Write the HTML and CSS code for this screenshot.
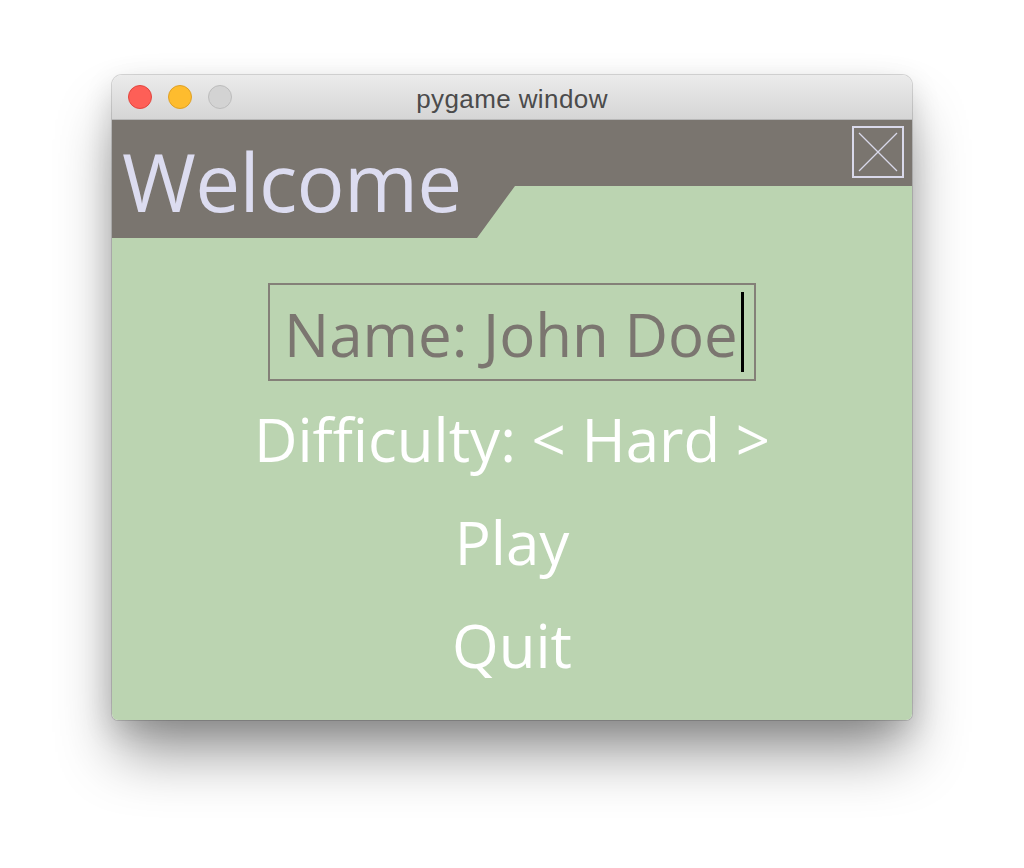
FILE: index.html
```html
<!DOCTYPE html>
<html>
<head>
<meta charset="utf-8">
<link rel="stylesheet" href="styles.css">
</head>
<body>
<div class="window">
  <div class="titlebar">
    <div class="lights">
      <span class="light red"></span>
      <span class="light yellow"></span>
      <span class="light gray"></span>
    </div>
    <div class="title">pygame window</div>
    <div></div>
  </div>
  <div class="content">
    <div class="header">
      <div class="heading">Welcome</div>
      <div class="closebox">
        <svg width="48" height="48" viewBox="0 0 48 48">
          <line x1="5" y1="5" x2="43" y2="43" />
          <line x1="43" y1="5" x2="5" y2="43" />
        </svg>
      </div>
    </div>
    <div class="menu">
      <div class="textbox"><span class="field">Name: John Doe</span><span class="cursor"></span></div>
      <div class="item">Difficulty: &lt; Hard &gt;</div>
      <div class="item">Play</div>
      <div class="item">Quit</div>
    </div>
  </div>
</div>
</body>
</html>
```
FILE: styles.css
```css
html, body {
  margin: 0;
  padding: 0;
  background: #ffffff;
}
body {
  padding: 75px 0 0 112px;
  height: 868px;
  box-sizing: border-box;
  overflow: hidden;
}
.window {
  width: 800px;
  border-radius: 10px 10px 6px 6px;
  overflow: hidden;
  box-shadow: 0 38px 60px -6px rgba(0,0,0,0.42), 0 10px 30px rgba(0,0,0,0.14), 0 0 0 1px rgba(0,0,0,0.14);
}
.titlebar {
  height: 44px;
  border-bottom: 1px solid #b8b8b8;
  background: linear-gradient(#ebebeb, #d5d5d5);
  display: grid;
  grid-template-columns: 1fr auto 1fr;
  align-items: center;
}
.lights {
  display: flex;
  gap: 16px;
  padding-left: 16px;
}
.light {
  width: 22px;
  height: 22px;
  border-radius: 50%;
  border: 1px solid;
}
.red { background: #fe5f57; border-color: #e1463f; }
.yellow { background: #febc2e; border-color: #dea026; }
.gray { background: #d3d3d3; border-color: #bcbcbc; }
.title {
  font-family: "Liberation Sans", Arial, sans-serif;
  font-size: 26px;
  letter-spacing: 0.4px;
  color: #4b4b4b;
  line-height: 44px;
  padding-top: 2px;
  height: 44px;
  box-sizing: border-box;
}
.content {
  height: 600px;
  background: #bbd4b1;
  font-family: "Open Sans", "Noto Sans", sans-serif;
}
.header {
  height: 118px;
  background: #7a756f;
  clip-path: polygon(0 0, 800px 0, 800px 66px, 403px 66px, 365px 118px, 0 118px);
  display: flex;
  justify-content: space-between;
  align-items: flex-start;
}
.heading {
  font-size: 80px;
  line-height: 80px;
  padding: 21px 0 0 10px;
  color: #dcdcf0;
  letter-spacing: -0.7px;
}
.closebox {
  width: 52px;
  height: 52px;
  box-sizing: border-box;
  border: 2px solid #d9d9ea;
  margin: 6px 8px 0 0;
}
.closebox svg {
  display: block;
}
.closebox line {
  stroke: #d9d9ea;
  stroke-width: 1.3;
}
.menu {
  display: flex;
  flex-direction: column;
  align-items: center;
  padding-top: 45px;
}
.textbox {
  width: 488px;
  height: 98px;
  box-sizing: border-box;
  border: 2px solid #848078;
  display: flex;
  align-items: flex-start;
  padding-left: 14px;
  margin-bottom: 7px;
}
.field {
  font-size: 60px;
  line-height: 82px;
  margin-top: 8px;
  color: #7b7670;
  white-space: nowrap;
}
.cursor {
  width: 3px;
  height: 80px;
  background: #000;
  margin: 7px 0 0 3px;
}
.item {
  font-size: 60px;
  line-height: 103px;
  color: #ffffff;
  white-space: nowrap;
}
```
